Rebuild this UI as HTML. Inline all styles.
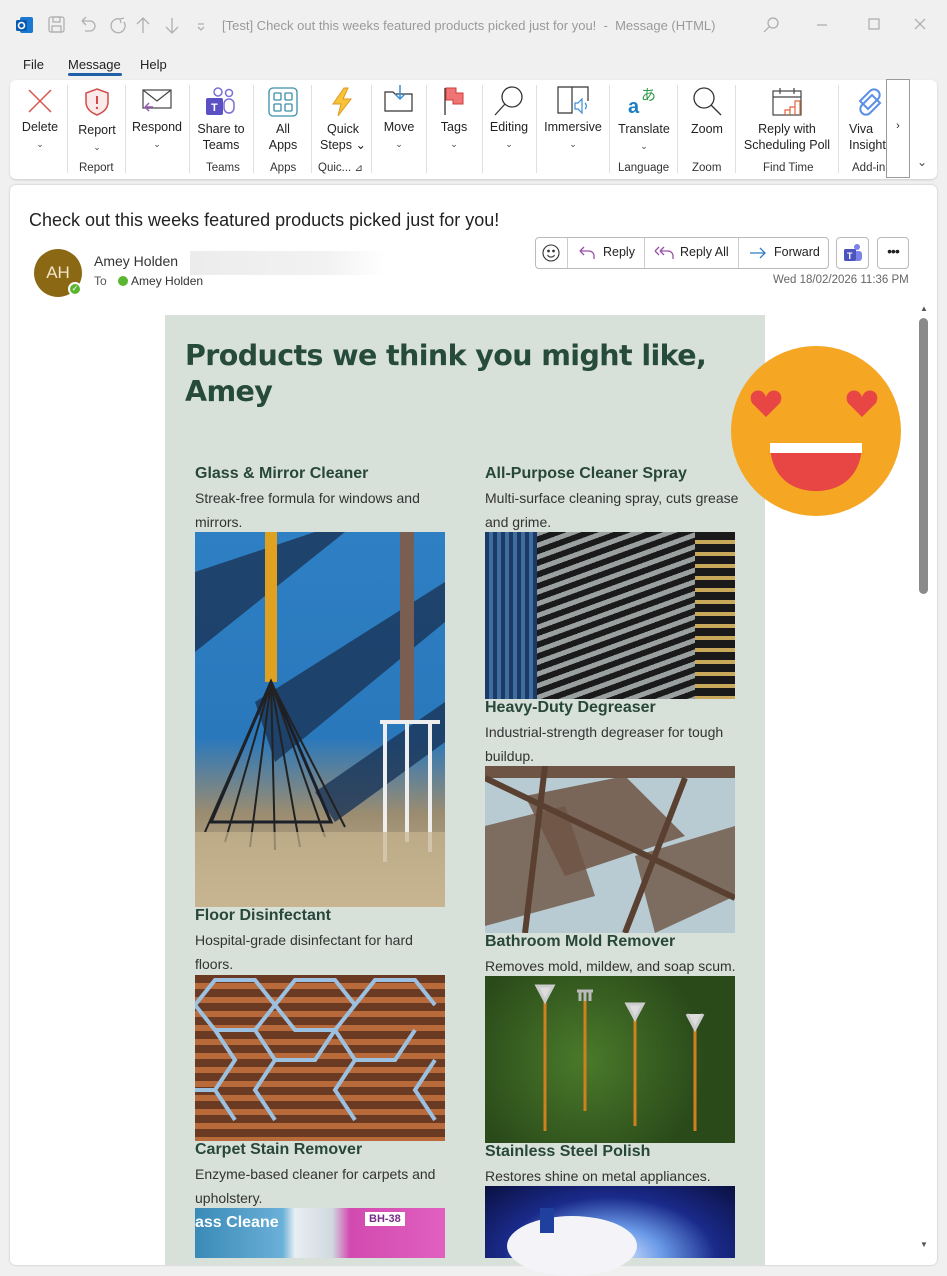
<!DOCTYPE html>
<html><head><meta charset="utf-8"><style>
*{box-sizing:border-box;margin:0;padding:0}
body{width:947px;height:1257px;overflow:hidden;background:#f0f0f0;font-family:"Liberation Sans",sans-serif;position:relative;color:#222}
.a{position:absolute}
.tb{font-size:13px;color:#9a9a9a}
.rib{left:10px;top:80px;width:927px;height:99px;background:#fff;border-radius:6px;box-shadow:0 1px 2px #ccc}
.btn{position:absolute;text-align:center;font-size:12.5px;color:#222;line-height:16px}
.grp{position:absolute;top:82px;font-size:11.5px;color:#333}
.sep{position:absolute;top:85px;width:1px;height:88px;background:#e0e0e0}
.chev{font-size:9px;color:#444}
.pane{left:10px;top:185px;width:927px;height:1080px;background:#fff;border-radius:6px;box-shadow:0 0 2px #bbb}
.box{left:165px;top:315px;width:600px;height:950px;background:#d7e0d9}
h3{font:bold 16px "Liberation Sans",sans-serif;color:#28473b}
.d{font-size:14px;color:#333;line-height:24px}
.ph{position:absolute}
</style></head><body>
<svg class="a" style="left:16px;top:16px" width="18" height="18"><rect x="4" y="1" width="13" height="16" rx="2" fill="#1b78d0"/><rect x="0" y="4" width="11" height="11" rx="1.5" fill="#0a5ab0"/><circle cx="5.5" cy="9.5" r="3" fill="none" stroke="#fff" stroke-width="1.6"/></svg>
<svg class="a" style="left:48px;top:15px" width="160" height="20" fill="none" stroke="#b0b0b0" stroke-width="1.3"><rect x="1" y="2" width="15" height="15" rx="2"/><rect x="5" y="2" width="7" height="5"/><rect x="4" y="11" width="9" height="6"/><path d="M34 6h8a5 5 0 010 10h-5M34 6l4-4M34 6l4 4"/><path d="M72 4a7 7 0 10 4 3M72 4l4-1M72 4l1 4"/><path d="M95 3v15M89 9l6-6 6 6"/><path d="M124 3v15M118 12l6 6 6-6"/><path d="M150 9h6M150 12l3 3 3-3"/></svg>
<div class="a tb" style="left:222px;top:18px">[Test] Check out this weeks featured products picked just for you!&nbsp; -&nbsp; Message (HTML)</div>
<svg class="a" style="left:762px;top:16px" width="180" height="18" fill="none" stroke="#aaa" stroke-width="1.2"><circle cx="11" cy="7" r="5"/><path d="M7 11l-5 5"/><path d="M55 9h10"/><rect x="107" y="3" width="10" height="10"/><path d="M153 3l10 10M163 3l-10 10"/></svg>
<div class="a" style="left:23px;top:57px;font-size:13px">File</div>
<div class="a" style="left:68px;top:57px;font-size:13px">Message</div>
<div class="a" style="left:68px;top:73px;width:54px;height:3px;background:#1f5fa8;border-radius:2px"></div>
<div class="a" style="left:140px;top:57px;font-size:13px">Help</div>
<div class="a rib"></div>
<svg class="a" style="left:27px;top:88px" width="26" height="26" stroke="#d9534f" stroke-width="1.5"><path d="M2 2l22 22M24 2L2 24"/></svg>
<div class="btn" style="left:18px;top:119px;width:44px">Delete<br><span class="chev">⌄</span></div>
<svg class="a" style="left:83px;top:87px" width="28" height="30"><path d="M14 2l11 4v9c0 7-6 11-11 13C9 26 3 22 3 15V6z" fill="#fbeaea" stroke="#d24b4b" stroke-width="1.5"/><path d="M14 9v8" stroke="#d24b4b" stroke-width="2"/><circle cx="14" cy="21" r="1.2" fill="#d24b4b"/></svg>
<div class="btn" style="left:74px;top:122px;width:46px">Report<br><span class="chev">⌄</span></div>
<div class="grp" style="left:79px;top:162px">Report</div>
<svg class="a" style="left:140px;top:89px" width="34" height="28" fill="none"><rect x="3" y="1" width="28" height="18" fill="#fff" stroke="#444" stroke-width="1.2"/><path d="M3 1l14 11 14-11" stroke="#444" stroke-width="1.2"/><path d="M13 18H5M5 18l4-4M5 18l4 4" stroke="#9b59b6" stroke-width="1.5"/></svg>
<div class="btn" style="left:130px;top:119px;width:54px">Respond<br><span class="chev">⌄</span></div>
<svg class="a" style="left:203px;top:86px" width="34" height="32"><circle cx="15" cy="6" r="4" fill="none" stroke="#7b6fd6" stroke-width="1.5"/><circle cx="26" cy="7" r="3.5" fill="none" stroke="#7b6fd6" stroke-width="1.5"/><rect x="21" y="13" width="10" height="14" rx="5" fill="none" stroke="#7b6fd6" stroke-width="1.5"/><rect x="3" y="12" width="17" height="17" rx="2" fill="#5b4fc4"/><text x="8" y="25" font-size="11" font-weight="bold" fill="#fff" font-family="Liberation Sans">T</text></svg>
<div class="btn" style="left:194px;top:121px;width:54px">Share to<br>Teams</div>
<div class="grp" style="left:206px;top:162px">Teams</div>
<svg class="a" style="left:268px;top:87px" width="30" height="30" fill="none" stroke="#3a8fa8" stroke-width="1.3"><rect x="1" y="1" width="28" height="28" rx="4"/><rect x="6" y="6" width="7" height="7" rx="1"/><rect x="17" y="6" width="7" height="7" rx="1"/><rect x="6" y="17" width="7" height="7" rx="1"/><rect x="17" y="17" width="7" height="7" rx="1"/></svg>
<div class="btn" style="left:262px;top:121px;width:42px">All<br>Apps</div>
<div class="grp" style="left:270px;top:162px">Apps</div>
<svg class="a" style="left:330px;top:87px" width="24" height="30"><path d="M14 1L3 17h8l-3 12 13-17h-8l5-11z" fill="#f7c33b" stroke="#e09a1a" stroke-width="1"/></svg>
<div class="btn" style="left:318px;top:121px;width:50px">Quick<br>Steps ⌄</div>
<div class="grp" style="left:318px;top:162px">Quic... <span style="font-size:10px">⊿</span></div>
<svg class="a" style="left:384px;top:84px" width="30" height="28" fill="none" stroke="#333" stroke-width="1.2"><path d="M1 8h8l2 2h17v17H1z"/><path d="M16 1v14M11 10l5 5 5-5" stroke="#3a8fd6" stroke-width="1.5"/></svg>
<div class="btn" style="left:378px;top:119px;width:42px">Move<br><span class="chev">⌄</span></div>
<svg class="a" style="left:443px;top:86px" width="22" height="30"><path d="M2 2v27" stroke="#333" stroke-width="1.3"/><path d="M3 2h10v5h7v11h-10v-4H3z" fill="#f07474" stroke="#d03b3b"/></svg>
<div class="btn" style="left:434px;top:119px;width:40px">Tags<br><span class="chev">⌄</span></div>
<svg class="a" style="left:493px;top:85px" width="32" height="32" fill="none" stroke="#333" stroke-width="1.3"><circle cx="19" cy="12" r="10"/><path d="M12 19L2 30"/></svg>
<div class="btn" style="left:486px;top:119px;width:46px">Editing<br><span class="chev">⌄</span></div>
<svg class="a" style="left:557px;top:85px" width="34" height="32" fill="none" stroke="#333" stroke-width="1.2"><path d="M1 2h14v26H1zM15 2h16v14"/><path d="M18 18h3l4-4v14l-4-4h-3z" stroke="#3a8fd6"/><path d="M28 18a4 4 0 010 6" stroke="#3a8fd6"/></svg>
<div class="btn" style="left:540px;top:119px;width:66px">Immersive<br><span class="chev">⌄</span></div>
<div class="a" style="left:628px;top:86px;width:34px;height:32px"><span style="position:absolute;left:0;top:10px;font-size:20px;color:#1f7ec2;font-weight:bold">a</span><span style="position:absolute;left:13px;top:-2px;font-size:15px;color:#2e9a4a;font-family:'Noto Sans CJK JP'">あ</span></div>
<div class="btn" style="left:614px;top:121px;width:60px">Translate<br><span class="chev">⌄</span></div>
<div class="grp" style="left:618px;top:162px">Language</div>
<svg class="a" style="left:691px;top:86px" width="32" height="32" fill="none" stroke="#333" stroke-width="1.3"><circle cx="13" cy="12" r="10"/><path d="M20 19l10 10"/></svg>
<div class="btn" style="left:686px;top:121px;width:42px">Zoom</div>
<div class="grp" style="left:692px;top:162px">Zoom</div>
<svg class="a" style="left:772px;top:87px" width="34" height="32" fill="none" stroke="#444" stroke-width="1.2"><rect x="1" y="4" width="28" height="24"/><path d="M1 10h28M8 1v6M22 1v6"/><path d="M18 28v-8h5v8M23 28v-14h5v14M13 28v-5h5" stroke="#e0633a"/></svg>
<div class="btn" style="left:742px;top:121px;width:90px">Reply with<br>Scheduling Poll</div>
<div class="grp" style="left:763px;top:162px">Find Time</div>
<svg class="a" style="left:855px;top:87px" width="30" height="30" fill="none" stroke="#5b8fe6" stroke-width="2"><path d="M15 4l-10 10 8 8 10-10a5 5 0 00-8-8zM15 26l10-10-8-8-10 10a5 5 0 008 8z"/></svg>
<div class="btn" style="left:845px;top:121px;width:42px;text-align:left;padding-left:4px;overflow:hidden">Viva<br>Insight</div>
<div class="grp" style="left:852px;top:162px">Add-in</div>
<div class="a" style="left:886px;top:79px;width:24px;height:99px;background:#fff;border:1px solid #999;font-size:11px;text-align:center;padding-top:40px">›</div>
<div class="a" style="left:917px;top:155px;font-size:12px;color:#444">⌄</div>
<div class="sep" style="left:67px"></div><div class="sep" style="left:125px"></div><div class="sep" style="left:189px"></div><div class="sep" style="left:253px"></div><div class="sep" style="left:311px"></div><div class="sep" style="left:371px"></div><div class="sep" style="left:426px"></div><div class="sep" style="left:482px"></div><div class="sep" style="left:536px"></div><div class="sep" style="left:609px"></div><div class="sep" style="left:677px"></div><div class="sep" style="left:735px"></div><div class="sep" style="left:838px"></div>
<div class="a pane"></div>
<div class="a" style="left:29px;top:210px;font-size:18px;color:#222">Check out this weeks featured products picked just for you!</div>
<div class="a" style="left:34px;top:249px;width:48px;height:48px;border-radius:50%;background:#8b6914;color:#f2e6c8;font-size:17px;text-align:center;line-height:48px">AH</div>
<div class="a" style="left:68px;top:282px;width:14px;height:14px;border-radius:50%;background:#5cb531;border:2px solid #fff;color:#fff;font-size:8px;text-align:center;line-height:10px">✓</div>
<div class="a" style="left:94px;top:253px;font-size:14px;color:#333">Amey Holden</div>
<div class="a" style="left:190px;top:251px;width:195px;height:24px;background:linear-gradient(90deg,#ececec,#f2f2f2 70%,#fff)"></div>
<div class="a" style="left:94px;top:274px;font-size:12px;color:#555">To <span style="display:inline-block;width:10px;height:10px;border-radius:50%;background:#5cb531;margin:0 3px 0 8px;vertical-align:-1px"></span><span style="color:#333">Amey Holden</span></div>
<div class="a" style="left:535px;top:237px;width:294px;height:32px;border:1px solid #bbb;border-radius:4px;background:#fff"></div>
<div class="a" style="left:567px;top:238px;width:1px;height:30px;background:#ccc"></div>
<div class="a" style="left:644px;top:238px;width:1px;height:30px;background:#ccc"></div>
<div class="a" style="left:738px;top:238px;width:1px;height:30px;background:#ccc"></div>
<svg class="a" style="left:542px;top:244px" width="18" height="18" fill="none" stroke="#333" stroke-width="1.1"><circle cx="9" cy="9" r="8"/><circle cx="6.5" cy="7" r=".8" fill="#333"/><circle cx="11.5" cy="7" r=".8" fill="#333"/><path d="M5.5 11a4 4 0 007 0"/></svg>
<svg class="a" style="left:578px;top:245px" width="18" height="16" fill="none" stroke="#9b4fa8" stroke-width="1.3"><path d="M2 6h9a5 5 0 015 5v3M2 6l4-4M2 6l4 4"/></svg>
<div class="a" style="left:603px;top:245px;font-size:12.5px">Reply</div>
<svg class="a" style="left:654px;top:245px" width="20" height="16" fill="none" stroke="#9b4fa8" stroke-width="1.3"><path d="M6 6h8a5 5 0 015 5v3M6 6l4-4M6 6l4 4M1 6l4-4M1 6l4 4"/></svg>
<div class="a" style="left:680px;top:245px;font-size:12.5px">Reply All</div>
<svg class="a" style="left:749px;top:246px" width="18" height="14" fill="none" stroke="#2b7bc8" stroke-width="1.3"><path d="M1 7h15M11 2l5 5-5 5"/></svg>
<div class="a" style="left:774px;top:245px;font-size:12.5px">Forward</div>
<div class="a" style="left:836px;top:237px;width:33px;height:32px;border:1px solid #bbb;border-radius:4px;background:#fff"></div>
<svg class="a" style="left:843px;top:243px" width="20" height="20"><circle cx="14" cy="4" r="3" fill="#7b83eb"/><rect x="11" y="8" width="8" height="10" rx="3" fill="#7b83eb"/><rect x="1" y="6" width="12" height="12" rx="1.5" fill="#4b53bc"/><text x="4" y="16" font-size="9" font-weight="bold" fill="#fff" font-family="Liberation Sans">T</text></svg>
<div class="a" style="left:877px;top:237px;width:32px;height:32px;border:1px solid #bbb;border-radius:4px;background:#fff;text-align:center;font-size:14px;line-height:26px;letter-spacing:-1px">•••</div>
<div class="a" style="left:773px;top:274px;font-size:11.5px;color:#666">Wed 18/02/2026 11:36 PM</div>
<div class="a" style="left:920px;top:304px;font-size:8px;color:#555">▲</div>
<div class="a" style="left:919px;top:318px;width:9px;height:276px;background:#8a8a8a;border-radius:5px"></div>
<div class="a" style="left:920px;top:1240px;font-size:8px;color:#555">▼</div>
<div class="a box"></div>
<div class="a" style="left:185px;top:338px;font:bold 28.5px 'DejaVu Sans',sans-serif;color:#264a3c;line-height:36px;letter-spacing:-0.6px">Products we think you might like,<br>Amey</div>
<div class="a" style="left:195px;top:465px;width:250px"><h3>Glass &amp; Mirror Cleaner</h3><div class="d" style="margin-top:3px">Streak-free formula for windows and mirrors.</div></div>
<div class="ph" style="left:195px;top:532px;width:250px;height:375px;background:linear-gradient(180deg,#2e7fc4 0%,#2a78bc 55%,#9b8c70 75%,#c9b896 100%)">
<svg width="250" height="375"><path d="M0 40l120 -40h30L0 120zM60 170l190-120v40L80 230zM120 260l130-90v40l-110 80z" fill="#1a3558" opacity=".8"/><rect x="70" y="0" width="12" height="150" fill="#e0a020"/><rect x="205" y="0" width="14" height="190" fill="#7a5e52"/><path d="M76 150l-60 140h120z" fill="none" stroke="#1b1f2a" stroke-width="3"/><path d="M76 150L10 300M76 150L30 310M76 150L55 315M76 150L80 318M76 150L105 315M76 150L130 305M76 150L150 295" stroke="#222" stroke-width="2"/><path d="M185 190h60M190 190v140M212 190v120M235 190v130" stroke="#eee" stroke-width="4" fill="none"/><rect x="0" y="300" width="250" height="75" fill="#c8b48e" opacity=".7"/></svg></div>
<div class="a" style="left:195px;top:907px;width:250px"><h3>Floor Disinfectant</h3><div class="d" style="margin-top:3px">Hospital-grade disinfectant for hard floors.</div></div>
<div class="ph" style="left:195px;top:975px;width:250px;height:166px;background:repeating-linear-gradient(180deg,#6b3a22 0 8px,#b86a3a 8px 14px),#8a4a2a">
<svg width="250" height="166" fill="none" stroke="#9cc0e0" stroke-width="4"><path d="M0 30l20-25h40l20 25-20 25H20zM80 30l20-25h40l20 25-20 25h-40zM160 30l20-25h40l20 25M20 55l20 30-20 30M60 55l20 30h40l20 -30M140 55l20 30h40l20-30M0 115h20l20 30M80 85l-20 30 20 30M160 85l-20 30 20 30M240 85l-20 30 20 30"/></svg></div>
<div class="a" style="left:195px;top:1141px;width:250px"><h3>Carpet Stain Remover</h3><div class="d" style="margin-top:3px">Enzyme-based cleaner for carpets and upholstery.</div></div>
<div class="ph" style="left:195px;top:1208px;width:250px;height:50px;background:linear-gradient(90deg,#3a8ab8 0,#6ab0d8 35%,#e8eef2 40%,#d0d8e0 55%,#d24ab0 62%,#e060c0 100%)"><span style="position:absolute;left:0;top:6px;color:#fff;font:bold 16px 'Liberation Sans'">ass Cleane</span><span style="position:absolute;left:170px;top:4px;background:#fff;color:#7a2a8a;font:bold 11px 'Liberation Sans';padding:1px 4px">BH-38</span></div>
<div class="a" style="left:485px;top:465px;width:255px"><h3>All-Purpose Cleaner Spray</h3><div class="d" style="margin-top:3px">Multi-surface cleaning spray, cuts grease and grime.</div></div>
<div class="ph" style="left:485px;top:532px;width:250px;height:167px;background:repeating-linear-gradient(160deg,#1a1a1a 0 6px,#9aa0a0 6px 11px),#555"><div style="position:absolute;left:0;top:0;width:52px;height:167px;background:repeating-linear-gradient(90deg,#1c3a66 0 4px,#3f6da0 4px 8px)"></div><div style="position:absolute;left:210px;top:0;width:40px;height:167px;background:repeating-linear-gradient(180deg,#1a1a1a 0 8px,#c8a85a 8px 12px)"></div></div>
<div class="a" style="left:485px;top:699px;width:250px"><h3>Heavy-Duty Degreaser</h3><div class="d" style="margin-top:3px">Industrial-strength degreaser for tough buildup.</div></div>
<div class="ph" style="left:485px;top:766px;width:250px;height:167px;background:#b8cad2">
<svg width="250" height="167" fill="#6e5444"><path d="M0 0h250v12H0z"/><path d="M40 30l100-20 60 60-120 40z" opacity=".85"/><path d="M0 60l80 -20 30 90-110 30z" opacity=".8"/><path d="M150 90l100-30v70l-80 37z" opacity=".8"/><path d="M0 12l250 120M60 0l-20 167M200 12l-60 155" stroke="#5a4030" stroke-width="6"/></svg></div>
<div class="a" style="left:485px;top:933px;width:255px"><h3>Bathroom Mold Remover</h3><div class="d" style="margin-top:3px">Removes mold, mildew, and soap scum.</div></div>
<div class="ph" style="left:485px;top:976px;width:250px;height:167px;background:radial-gradient(circle at 40% 50%,#4a7a2a,#2a4a1a 70%)">
<svg width="250" height="167" stroke-width="3" fill="none"><path d="M60 25v130M100 25v110M150 40v110M210 45v110" stroke="#d08020"/><path d="M52 10l8 15 8-15zM142 28l8 15 8-15zM202 38l8 15 8-15" fill="#ddd" stroke="#ccc"/><path d="M92 15h16M95 15v10M100 15v10M105 15v10" stroke="#bbb"/></svg></div>
<div class="a" style="left:485px;top:1143px;width:255px"><h3>Stainless Steel Polish</h3><div class="d" style="margin-top:3px">Restores shine on metal appliances.</div></div>
<div class="ph" style="left:485px;top:1186px;width:250px;height:72px;background:radial-gradient(ellipse at 50% 100%,#e8f0ff 0,#6a9ae8 30%,#1a2a8a 60%,#0a1040 100%)"><div style="position:absolute;left:22px;top:30px;width:130px;height:60px;border-radius:50%;background:#f4f4f8"></div><div style="position:absolute;left:55px;top:22px;width:14px;height:25px;background:#2040a0"></div></div>
<svg class="a" style="left:730px;top:345px" width="172" height="172"><circle cx="86" cy="86" r="85" fill="#f5a623"/><path d="M22 58c-6-12 10-18 14-6 4-12 20-6 14 6l-14 14z" fill="#e84545"/><path d="M118 58c-6-12 10-18 14-6 4-12 20-6 14 6l-14 14z" fill="#e84545"/><path d="M40 98h92c0 32-20 48-46 48S40 130 40 98z" fill="#e84545"/><rect x="40" y="98" width="92" height="10" fill="#fff"/></svg>
</body></html>
